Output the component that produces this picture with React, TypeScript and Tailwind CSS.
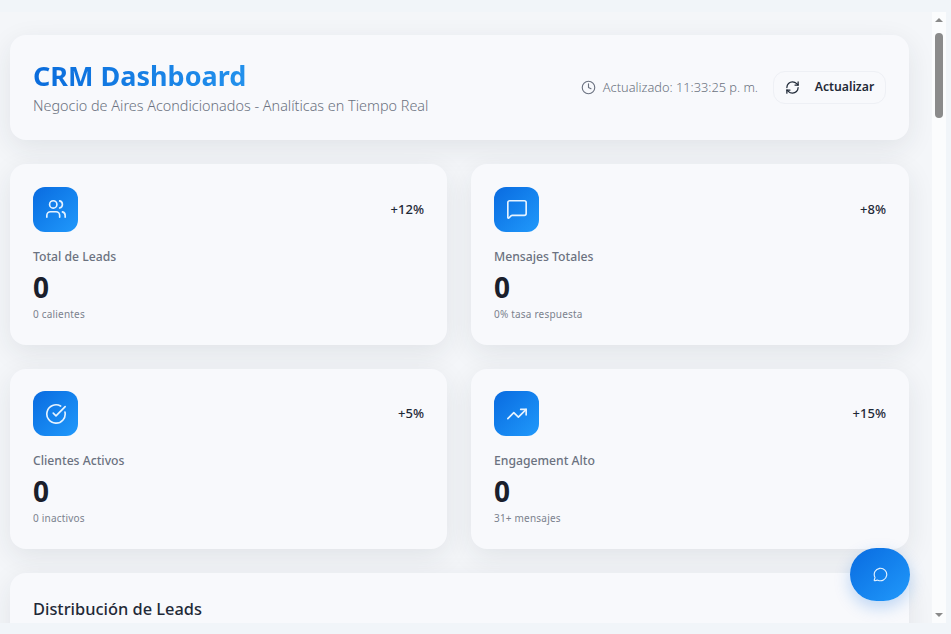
import { CheckCircle, Clock, MessageCircle, MessageSquare, RefreshCw, TrendingUp, Users } from "lucide-react";
import type { ElementType } from "react";

interface Stat {
  icon: ElementType;
  label: string;
  change: string;
  note: string;
}

const rows: Stat[][] = [
  [
    { icon: Users, label: "Total de Leads", change: "+12%", note: "0 calientes" },
    { icon: MessageSquare, label: "Mensajes Totales", change: "+8%", note: "0% tasa respuesta" },
  ],
  [
    { icon: CheckCircle, label: "Clientes Activos", change: "+5%", note: "0 inactivos" },
    { icon: TrendingUp, label: "Engagement Alto", change: "+15%", note: "31+ mensajes" },
  ],
];

const StatCard = ({ icon: Icon, label, change, note }: Stat) => (
  <div className="h-[180.5px] bg-[#f8f9fc] rounded-[16px] shadow-[0_8px_28px_rgba(30,41,59,0.09)] px-[23px] pt-[22.75px]">
    <div className="flex items-center justify-between">
      <div className="w-[45px] h-[45px] rounded-[12px] bg-gradient-to-br from-[#0a6be0] to-[#2199fb] flex items-center justify-center">
        <Icon className="w-[22px] h-[22px] text-[#e6f3ff]" strokeWidth={1.8} />
      </div>
      <span className="text-[13px] font-medium text-[#1f2937]">{change}</span>
    </div>
    <div className="mt-[16px] text-[12.2px] leading-[18px] font-medium text-[#6b7280]">{label}</div>
    <div className="mt-[3px] text-[28px] leading-[36px] font-bold text-[#1a202c]">0</div>
    <div className="mt-[2px] text-[10px] leading-[14px] text-[#7b828e] tracking-[0.2px]">{note}</div>
  </div>
);

export default function App() {
  return (
    <div className="relative w-[951px] h-[634px] overflow-hidden bg-[#f1f5f9] font-['Noto_Sans','Open_Sans',sans-serif]">
      <div className="absolute left-0 top-[12px] w-[946px] h-[611px] overflow-hidden bg-[#f4f6f9]">
        <div className="w-[932px] h-full overflow-hidden pl-[10px] pr-[23px] pt-[23px] flex flex-col gap-[24px]">
          {/* Header */}
          <div className="shrink-0 h-[105px] bg-[#f8f9fc] rounded-[16px] shadow-[0_8px_28px_rgba(30,41,59,0.09)] px-[23px] flex items-center justify-between">
            <div>
              <h1 className="text-[27px] leading-[34px] font-bold bg-gradient-to-r from-[#0a6cdc] to-[#2391ec] bg-clip-text text-transparent w-fit">
                CRM Dashboard
              </h1>
              <p className="text-[14.4px] leading-[20px] font-light text-[#6b7280] mt-[3px]">
                Negocio de Aires Acondicionados - Analíticas en Tiempo Real
              </p>
            </div>
            <div className="flex items-center">
              <Clock className="w-[15px] h-[15px] text-[#6b7280] mr-[7px]" strokeWidth={1.8} />
              <span className="text-[12.8px] font-light text-[#6b7280]">Actualizado: 11:33:25 p. m.</span>
              <button className="ml-[15px] w-[113px] h-[33px] rounded-[12px] border border-[#eef0f5] bg-[#f8f9fc] flex items-center justify-center gap-[15px]">
                <RefreshCw className="w-[15px] h-[15px] text-[#1f2937]" strokeWidth={2} />
                <span className="text-[12.2px] font-semibold text-[#1f2937]">Actualizar</span>
              </button>
            </div>
          </div>

          {rows.map((row, i) => (
            <div key={i} className="shrink-0 grid grid-cols-[437px_1fr] gap-[24px]">
              {row.map((stat) => (
                <StatCard key={stat.label} {...stat} />
              ))}
            </div>
          ))}

          {/* Distribution */}
          <div className="shrink-0 h-[200px] bg-[#f8f9fc] rounded-[16px] shadow-[0_8px_28px_rgba(30,41,59,0.09)] px-[23px] pt-[25px]">
            <h2 className="text-[16.4px] leading-[22px] font-medium text-[#1f2937]">Distribución de Leads</h2>
          </div>
        </div>

        {/* Scrollbar */}
        <div className="absolute right-0 top-0 bottom-0 w-[14px] bg-[#fbfcfd] flex flex-col items-center justify-between py-[6px]">
          <div className="w-0 h-0 border-x-[4px] border-x-transparent border-b-[4px] border-b-[#8a8a8a]" />
          <div className="absolute top-[21px] left-[3px] w-[8px] h-[85px] rounded-full bg-[#8b8b8b]" />
          <div className="w-0 h-0 border-x-[4px] border-x-transparent border-t-[4px] border-t-[#8a8a8a]" />
        </div>
      </div>

      {/* Chat button */}
      <button className="absolute left-[850px] top-[548px] w-[60px] h-[53px] rounded-full bg-gradient-to-br from-[#0a6be0] to-[#2199fb] shadow-[0_6px_16px_rgba(10,107,224,0.25)] flex items-center justify-center">
        <MessageCircle className="w-[15px] h-[15px] text-[#e6f3ff]" strokeWidth={1.8} />
      </button>
    </div>
  );
}
